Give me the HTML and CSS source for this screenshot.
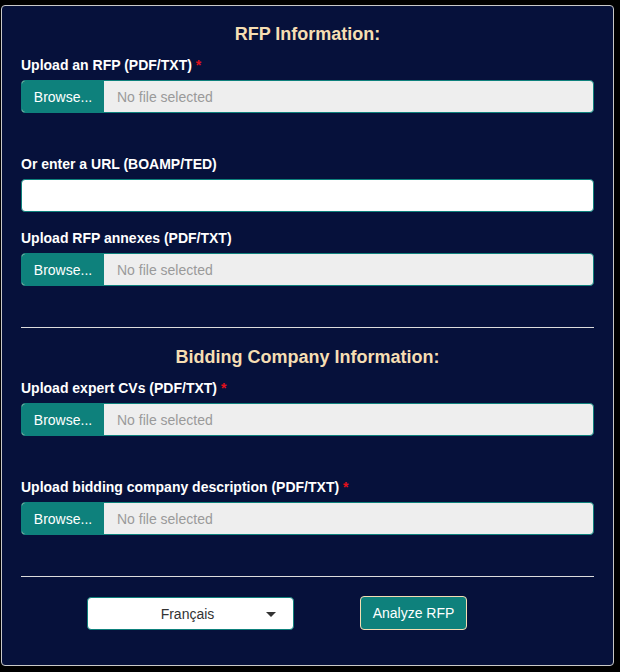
FILE: index.html
```html
<!DOCTYPE html>
<html lang="en">
<head>
<meta charset="utf-8">
<title>RFP Analyzer</title>
<link rel="stylesheet" href="styles.css">
</head>
<body>
<form class="card">
  <h2 class="section-title">RFP Information:</h2>

  <div class="group group-tall">
    <label class="label">Upload an RFP (PDF/TXT) <span class="req">*</span></label>
    <div class="file">
      <span class="file-btn">Browse...</span>
      <span class="file-name">No file selected</span>
    </div>
  </div>

  <div class="group">
    <label class="label">Or enter a URL (BOAMP/TED)</label>
    <div class="text-input"></div>
  </div>

  <div class="group">
    <label class="label">Upload RFP annexes (PDF/TXT)</label>
    <div class="file">
      <span class="file-btn">Browse...</span>
      <span class="file-name">No file selected</span>
    </div>
  </div>

  <hr class="divider">

  <h2 class="section-title">Bidding Company Information:</h2>

  <div class="group group-tall">
    <label class="label">Upload expert CVs (PDF/TXT) <span class="req">*</span></label>
    <div class="file">
      <span class="file-btn">Browse...</span>
      <span class="file-name">No file selected</span>
    </div>
  </div>

  <div class="group">
    <label class="label">Upload bidding company description (PDF/TXT) <span class="req">*</span></label>
    <div class="file">
      <span class="file-btn">Browse...</span>
      <span class="file-name">No file selected</span>
    </div>
  </div>

  <hr class="divider">

  <div class="actions">
    <div class="select">
      <span class="select-value">Français</span>
      <span class="select-arrow"></span>
    </div>
    <button type="button" class="submit">Analyze RFP</button>
  </div>
</form>
</body>
</html>
```

FILE: styles.css
```css
html, body {
  margin: 0;
  padding: 0;
  background: #000000;
  font-family: "Liberation Sans", Arial, sans-serif;
}

body {
  padding: 5px 0 0 1px;
  height: 672px;
  box-sizing: border-box;
}

.card {
  width: 613px;
  height: 661px;
  box-sizing: border-box;
  background: #06113b;
  border: 1px solid #c9c9c9;
  border-radius: 4px;
  padding: 18px 19px 0 19px;
  display: flex;
  flex-direction: column;
}

.section-title {
  margin: 0 0 14px 0;
  font-size: 18px;
  line-height: 20px;
  font-weight: bold;
  color: #f5deb3;
  text-align: center;
}

.group {
  margin-bottom: 19px;
}

.group-tall {
  margin-bottom: 44px;
}

.label {
  display: block;
  font-size: 14px;
  line-height: 15px;
  font-weight: bold;
  color: #ffffff;
  margin-bottom: 7px;
}

.req {
  color: #e3101a;
}

.file {
  display: flex;
  height: 33px;
  box-sizing: border-box;
  border: 1px solid #0e817c;
  border-radius: 4px;
  background: #eeeeee;
  overflow: hidden;
}

.file-btn {
  width: 83px;
  box-sizing: border-box;
  margin: -1px 0 -1px -1px;
  background: #0e817c;
  color: #ffffff;
  border: 1px solid #f5deb3;
  border-right: none;
  border-radius: 4px 0 0 4px;
  font-size: 14px;
  display: flex;
  align-items: center;
  justify-content: center;
}

.file-name {
  padding-left: 13px;
  color: #9a9a9a;
  font-size: 14px;
  display: flex;
  align-items: center;
}

.text-input {
  height: 33px;
  box-sizing: border-box;
  background: #ffffff;
  border: 1px solid #0e817c;
  border-radius: 4px;
}

.divider {
  margin: 22px 0 19px 0;
  border: none;
  border-top: 1px solid #dcdcdc;
  height: 0;
}

.actions {
  display: flex;
  align-items: center;
  margin-top: 0;
  padding-left: 66px;
  gap: 66px;
}

.select {
  width: 207px;
  height: 33px;
  box-sizing: border-box;
  background: #ffffff;
  border: 1px solid #0e817c;
  border-radius: 4px;
  position: relative;
  display: flex;
  align-items: center;
  justify-content: center;
  font-size: 14px;
  color: #333333;
  margin-top: 1px;
}

.select-value {
  margin-right: 6px;
}

.select-arrow {
  position: absolute;
  right: 17px;
  top: 14px;
  width: 0;
  height: 0;
  border-left: 5px solid transparent;
  border-right: 5px solid transparent;
  border-top: 5px solid #333333;
}

.submit {
  width: 107px;
  height: 34px;
  box-sizing: border-box;
  background: #0e817c;
  color: #ffffff;
  border: 1px solid #f5deb3;
  border-radius: 4px;
  font-family: "Liberation Sans", Arial, sans-serif;
  font-size: 14px;
  padding: 0;
}
```
